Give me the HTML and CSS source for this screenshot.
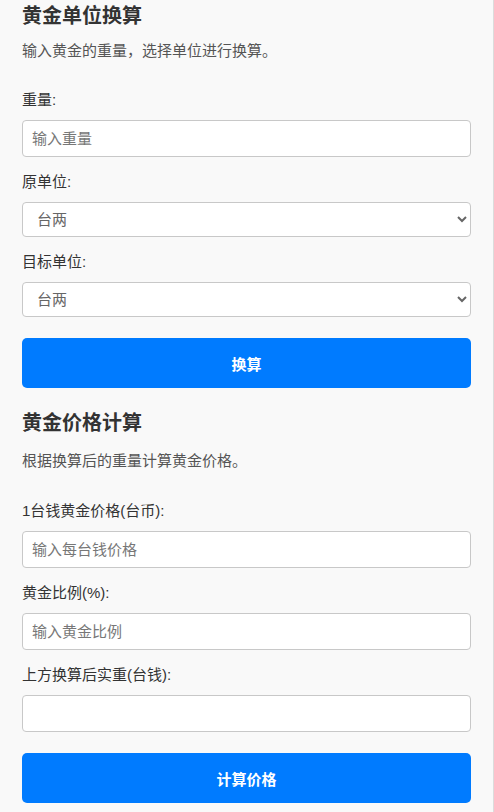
FILE: index.html
```html
<!DOCTYPE html>
<html lang="zh-CN">
<head>
<meta charset="utf-8">
<title>黄金单位换算</title>
<link rel="stylesheet" href="styles.css">
</head>
<body>
<div class="page">
  <section class="section">
    <h2 class="title">黄金单位换算</h2>
    <p class="desc">输入黄金的重量，选择单位进行换算。</p>
    <div class="field">
      <label class="label" for="weight">重量:</label>
      <input class="input" id="weight" type="text" placeholder="输入重量">
    </div>
    <div class="field">
      <label class="label" for="from">原单位:</label>
      <select class="select" id="from"><option>台两</option><option>台钱</option><option>克</option></select>
    </div>
    <div class="field">
      <label class="label" for="to">目标单位:</label>
      <select class="select" id="to"><option>台两</option><option>台钱</option><option>克</option></select>
    </div>
    <button class="btn" type="button">换算</button>
  </section>
  <section class="section section-second">
    <h2 class="title">黄金价格计算</h2>
    <p class="desc">根据换算后的重量计算黄金价格。</p>
    <div class="field">
      <label class="label" for="price">1台钱黄金价格(台币):</label>
      <input class="input" id="price" type="text" placeholder="输入每台钱价格">
    </div>
    <div class="field">
      <label class="label" for="ratio">黄金比例(%):</label>
      <input class="input" id="ratio" type="text" placeholder="输入黄金比例">
    </div>
    <div class="field">
      <label class="label" for="result">上方换算后实重(台钱):</label>
      <input class="input" id="result" type="text">
    </div>
    <button class="btn" type="button">计算价格</button>
  </section>
</div>
</body>
</html>
```
FILE: styles.css
```css
html {
  background: #f9f9f9;
}
body {
  margin: 0;
  font-family: "Liberation Sans", Arial, "Noto Sans CJK SC", sans-serif;
  color: #333;
}
.page {
  min-height: 812px;
  box-sizing: border-box;
  padding: 0 22px;
  border-right: 1px solid #dcdcdc;
}
.section {
  display: flex;
  flex-direction: column;
}
.section-second {
  margin-top: 19px;
}
.title {
  margin: 0 0 10px;
  font-size: 20px;
  font-weight: bold;
  color: #333;
}
.section-second .title {
  margin-bottom: 13px;
}
.desc {
  margin: 0 0 29px;
  font-size: 15px;
  color: #555;
}
.section-second .desc {
  margin-bottom: 30px;
}
.field {
  display: flex;
  flex-direction: column;
  margin-bottom: 14px;
}
.label {
  font-size: 15px;
  line-height: 22px;
  color: #333;
  margin-bottom: 9px;
}
.input {
  box-sizing: border-box;
  height: 37px;
  padding: 0 9px;
  border: 1px solid #c8c8c8;
  border-radius: 4px;
  background: #fff;
  font-family: inherit;
  font-size: 15px;
  color: #333;
}
.input::placeholder {
  color: #777;
}
.select {
  box-sizing: border-box;
  height: 35px;
  padding: 0 10px;
  border: 1px solid #c8c8c8;
  border-radius: 4px;
  background: #fff;
  font-family: inherit;
  font-size: 15px;
  color: #666;
}
.btn {
  margin-top: 7px;
  height: 50px;
  border: none;
  border-radius: 5px;
  background: #007bff;
  color: #fff;
  font-family: inherit;
  font-size: 15px;
  font-weight: bold;
}
```
